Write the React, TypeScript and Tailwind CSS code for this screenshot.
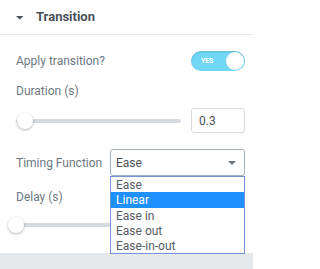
import React from "react";

const font = { fontFamily: "Roboto, 'Liberation Sans', sans-serif" };

function Slider({ knobLeft }: { knobLeft: string }) {
  return (
    <div className="relative flex-1 h-[18px] flex items-center">
      <div className="w-full h-[4px] rounded-full bg-[#d5dadf]" />
      <div
        className={`absolute top-[1px] w-[16px] h-[16px] rounded-full bg-white shadow-[0_1px_3px_rgba(0,0,0,0.3)] ${knobLeft}`}
      />
    </div>
  );
}

export default function App() {
  const options = ["Ease", "Linear", "Ease in", "Ease out", "Ease-in-out"];

  return (
    <div className="relative w-[253px] h-[269px] bg-white overflow-hidden" style={font}>
      {/* header */}
      <div className="h-[35px] border-b border-[#e6e9ec] flex items-center pl-[16px]">
        <svg width="8" height="4" viewBox="0 0 8 4" className="mt-[1px]">
          <path d="M0 0h7.5L3.75 3.5z" fill="#495157" />
        </svg>
        <span className="ml-[12px] text-[13px] font-bold text-[#495157]">Transition</span>
      </div>

      <div className="pl-[16px] pr-[8px]">
        {/* apply transition */}
        <div className="mt-[16px] h-[20px] flex items-center justify-between">
          <span className="text-[12px] text-[#6d7882]">Apply transition?</span>
          <div className="relative w-[54px] h-[20px] rounded-full bg-[#71d7f7] shadow-[inset_0_1px_2px_rgba(0,0,0,0.15)] flex items-center">
            <span className="ml-[10px] text-[7px] font-bold text-white uppercase tracking-tight">Yes</span>
            <div className="absolute right-[1px] top-[1px] w-[18px] h-[18px] rounded-full bg-white" />
          </div>
        </div>

        {/* duration */}
        <div className="mt-[12px] h-[16px] flex items-center text-[12px] text-[#6d7882]">Duration (s)</div>
        <div className="mt-[9px] h-[25px] flex items-center gap-[10px]">
          <Slider knobLeft="left-[1px]" />
          <div className="w-[54px] h-[25px] border border-[#d5dadf] rounded-[3px] flex items-center pl-[7px] text-[12px] text-[#495157]">
            0.3
          </div>
        </div>

        {/* timing function */}
        <div className="mt-[16px] h-[27px] flex items-center">
          <span className="w-[94px] text-[12px] text-[#6d7882]">Timing Function</span>
          <div className="flex-1 h-[27px] border border-[#a4afb7] rounded-[3px] flex items-center justify-between pl-[5px] pr-[8px] text-[12px] text-[#495157]">
            <span>Ease</span>
            <svg width="8" height="4" viewBox="0 0 8 4">
              <path d="M0 0h8L4 4z" fill="#6d7882" />
            </svg>
          </div>
        </div>

        {/* delay */}
        <div className="mt-[13px] h-[16px] flex items-center text-[12px] text-[#6d7882]">Delay (s)</div>
        <div className="mt-[12px] h-[16px] flex items-center gap-[10px] -ml-[8px]">
          <Slider knobLeft="left-0" />
          <div className="w-[54px] h-[25px]" />
        </div>
      </div>

      <div className="mt-[20px] h-[16px] bg-[#e6e9ec]" />

      {/* open dropdown list */}
      <div className="absolute left-[110px] top-[176px] w-[135px] border border-[#7393d4] bg-white text-[12px] text-[#555d66]">
        {options.map((o) => (
          <div
            key={o}
            className={
              o === "Linear"
                ? "h-[16px] flex items-center pl-[5px] bg-[#1e90ff] text-white"
                : "h-[15px] flex items-center pl-[5px]"
            }
          >
            {o}
          </div>
        ))}
      </div>
    </div>
  );
}
